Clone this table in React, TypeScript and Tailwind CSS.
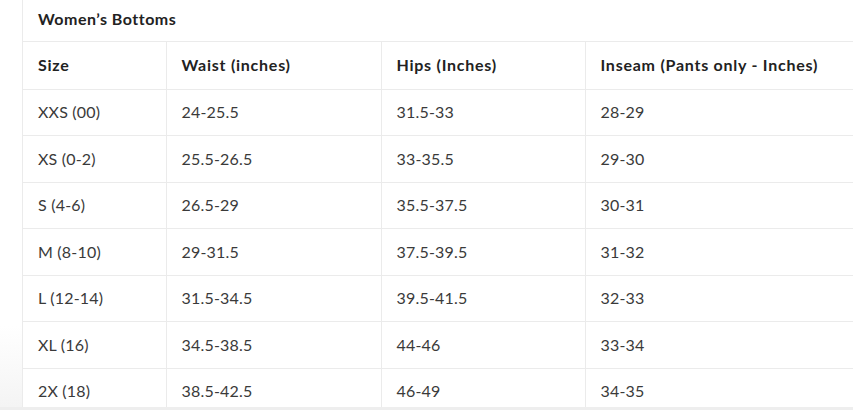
import React from "react";

const rows = [
  ["XXS (00)", "24-25.5", "31.5-33", "28-29"],
  ["XS (0-2)", "25.5-26.5", "33-35.5", "29-30"],
  ["S (4-6)", "26.5-29", "35.5-37.5", "30-31"],
  ["M (8-10)", "29-31.5", "37.5-39.5", "31-32"],
  ["L (12-14)", "31.5-34.5", "39.5-41.5", "32-33"],
  ["XL (16)", "34.5-38.5", "44-46", "33-34"],
  ["2X (18)", "38.5-42.5", "46-49", "34-35"],
];

export default function App() {
  return (
    <div
      className="w-[853px] h-[410px] overflow-hidden bg-white flex flex-col"
      style={{ fontFamily: "Lato, 'Open Sans', sans-serif" }}
    >
      <div className="flex flex-1 min-h-0">
        <div className="w-[22px] shrink-0 bg-gradient-to-b from-white from-80% to-[#f4f4f4]" />
        <div className="flex-1 min-w-0 border-l border-[#ebebeb] overflow-hidden">
          <div className="h-[42px] border-b border-[#ebebeb] flex items-center pl-[15px] pb-[4px] text-[16px] font-bold text-[#222] tracking-[0.5px]">
            Women’s Bottoms
          </div>
          <table className="border-collapse table-fixed w-[900px]">
            <colgroup>
              <col className="w-[143px]" />
              <col className="w-[215px]" />
              <col className="w-[204px]" />
              <col />
            </colgroup>
            <thead>
              <tr className="h-[47px] border-b border-[#ebebeb]">
                {["Size", "Waist (inches)", "Hips (Inches)", "Inseam (Pants only - Inches)"].map((h, i) => (
                  <th
                    key={h}
                    className={`text-left font-bold text-[16px] text-[#222] pl-[15px] p-0 align-middle whitespace-nowrap tracking-[0.75px] ${i > 0 ? "border-l border-[#ebebeb]" : ""}`}
                  >
                    {h}
                  </th>
                ))}
              </tr>
            </thead>
            <tbody>
              {rows.map((r) => (
                <tr key={r[0]} className="h-[46.5px] border-b border-[#ebebeb]">
                  {r.map((c, i) => (
                    <td
                      key={i}
                      className={`pl-[15px] p-0 align-middle text-[16px] text-[#3a3a3a] whitespace-nowrap tracking-[0.2px] ${i > 0 ? "border-l border-[#ebebeb]" : ""}`}
                    >
                      {c}
                    </td>
                  ))}
                </tr>
              ))}
            </tbody>
          </table>
        </div>
      </div>
      <div className="h-[3px] shrink-0 bg-[#eeeeee]" />
    </div>
  );
}
